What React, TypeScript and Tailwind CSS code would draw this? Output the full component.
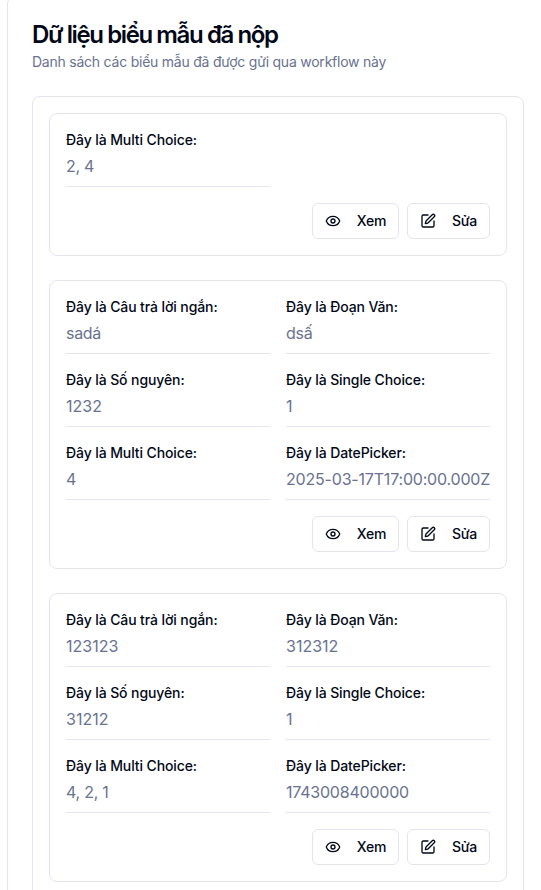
import React from "react";
import { Eye, SquarePen } from "lucide-react";

type Field = { label: string; value: string; tracking?: string };

const submissions: Field[][] = [
  [{ label: "Đây là Multi Choice:", value: "2, 4", tracking: "tracking-[-0.25px]" }],
  [
    { label: "Đây là Câu trả lời ngắn:", value: "sadá", tracking: "tracking-[-0.3px]" },
    { label: "Đây là Đoạn Văn:", value: "dsấ", tracking: "tracking-[-0.3px]" },
    { label: "Đây là Số nguyên:", value: "1232" },
    { label: "Đây là Single Choice:", value: "1" },
    { label: "Đây là Multi Choice:", value: "4" },
    { label: "Đây là DatePicker:", value: "2025-03-17T17:00:00.000Z", tracking: "tracking-[-0.19px]" },
  ],
  [
    { label: "Đây là Câu trả lời ngắn:", value: "123123" },
    { label: "Đây là Đoạn Văn:", value: "312312" },
    { label: "Đây là Số nguyên:", value: "31212" },
    { label: "Đây là Single Choice:", value: "1" },
    { label: "Đây là Multi Choice:", value: "4, 2, 1", tracking: "tracking-[-0.25px]" },
    { label: "Đây là DatePicker:", value: "1743008400000", tracking: "tracking-[-0.22px]" },
  ],
];

function ActionButton({ icon, children }: { icon: React.ReactNode; children: React.ReactNode }) {
  return (
    <button className="flex h-9 items-center gap-4 rounded-md border border-[#e4e4f0] bg-white px-3 text-sm font-medium tracking-[-0.3px]">
      {icon}
      {children}
    </button>
  );
}

function SubmissionCard({ fields }: { fields: Field[] }) {
  return (
    <div className="rounded-lg border border-[#e4e4f0] p-4">
      <div className="grid grid-cols-2 gap-4">
        {fields.map((f) => (
          <div key={f.label} className="h-[57px] border-b border-[#e4e4f0]">
            <p className="text-sm leading-5 font-medium tracking-[-0.1px]">{f.label}</p>
            <p className={`mt-1 text-base leading-6 whitespace-nowrap text-[#69728f] ${f.tracking ?? ""}`}>{f.value}</p>
          </div>
        ))}
      </div>
      <div className="mt-4 flex justify-end gap-2">
        <ActionButton icon={<Eye size={16} />}>Xem</ActionButton>
        <ActionButton icon={<SquarePen size={16} />}>Sửa</ActionButton>
      </div>
    </div>
  );
}

export default function App() {
  return (
    <div className="h-[890px] overflow-hidden bg-white pl-[7px] font-['Inter',sans-serif] text-[#020817]">
      <main className="-mt-1 h-[920px] rounded-tl-lg border-l border-[#e4e4f0] pt-[27px] pr-[17px] pl-6">
        <h1 className="text-2xl leading-6 font-semibold tracking-[-1.4px]">Dữ liệu biểu mẫu đã nộp</h1>
        <p className="mt-[5px] text-sm leading-5 tracking-[-0.23px] text-[#69728f]">Danh sách các biểu mẫu đã được gửi qua workflow này</p>
        <section className="mt-6 flex flex-col gap-6 rounded-lg border border-[#e4e4f0] p-4">
          {submissions.map((fields, i) => (
            <SubmissionCard key={i} fields={fields} />
          ))}
        </section>
      </main>
    </div>
  );
}
